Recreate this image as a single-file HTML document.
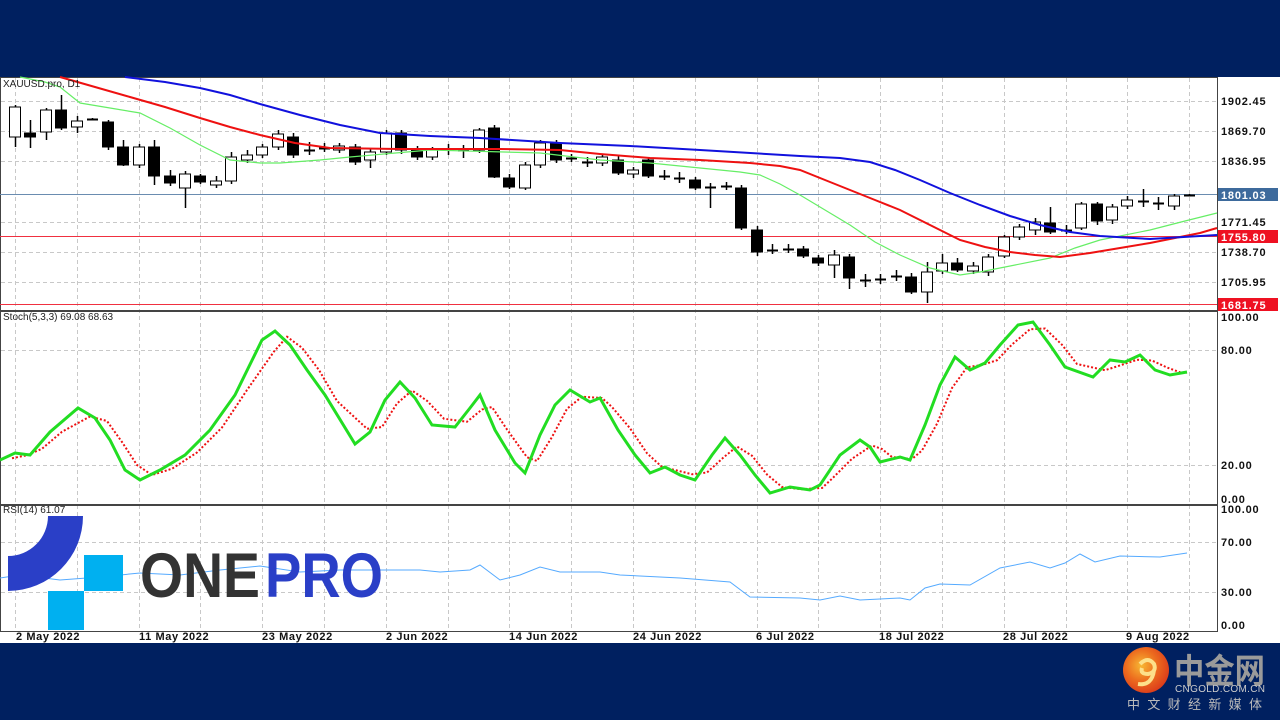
<!DOCTYPE html>
<html><head><meta charset="utf-8"><style>
body{margin:0;width:1280px;height:720px;background:#002060;overflow:hidden;position:relative;font-family:"Liberation Sans",sans-serif}
svg{position:absolute;left:0;top:0}
</style></head><body>
<svg id="s" width="1280" height="720" xmlns="http://www.w3.org/2000/svg">
<rect x="0" y="77" width="1280" height="566" fill="#fff"/>
<g id="grid" stroke="#c8c8c8" stroke-dasharray="4,3" stroke-width="1"></g>
<g fill="none" stroke-width="1" stroke="#444">
<rect x="0.5" y="77.5" width="1217" height="233"/>
<rect x="0.5" y="311.5" width="1217" height="193"/>
<rect x="0.5" y="505.5" width="1217" height="126"/>
</g>
<line x1="0" y1="194.5" x2="1217" y2="194.5" stroke="#6a8cb0"/>
<line x1="0" y1="236.5" x2="1217" y2="236.5" stroke="#f03040"/>
<line x1="0" y1="304.5" x2="1217" y2="304.5" stroke="#f03040"/>
<g id="candles"></g>
<polyline fill="none" stroke="#66ee66" stroke-width="1.2" points="20,77 45,82 60,87 80,103 110,108 140,113 170,128 200,145 230,160 260,163 280,163 320,160 350,157 430,150 540,153 600,160 650,163 700,168 740,172 760,175 780,184 800,195 825,210 850,225 875,242 900,255 930,268 960,275 980,272 1000,268 1050,258 1075,248 1100,240 1150,230 1185,221 1217,213"/>
<polyline fill="none" stroke="#ee1111" stroke-width="2" points="60,77 95,87 130,97 165,107 200,118 230,127 260,135 295,143 330,148 400,149 500,149 560,150 600,154 650,158 700,160 750,163 780,166 800,170 825,180 850,190 875,200 900,210 930,225 960,240 985,247 1010,252 1035,255 1060,257 1090,253 1120,248 1150,243 1180,237 1200,233 1217,228"/>
<polyline fill="none" stroke="#1111dd" stroke-width="2" points="125,77 165,82 200,88 230,95 260,104 300,115 340,125 380,133 430,136 480,138 560,143 630,146 700,150 800,156 840,158 870,162 895,170 920,180 950,193 980,205 1010,216 1040,225 1070,232 1100,236 1150,239 1217,235"/>
<polyline id="sig" fill="none" stroke="#ee1111" stroke-width="2" stroke-dasharray="2,2"/>
<polyline id="stk" fill="none" stroke="#22dd22" stroke-width="3"/>
<polyline fill="none" stroke="#55aaff" stroke-width="1" points="0,578 20,575 60,580 100,577 140,573 180,575 220,570 260,566 300,572 340,570 380,570 420,570 440,572 470,570 480,565 500,580 520,575 540,567 560,572 600,572 620,575 680,578 730,582 750,597 800,598 820,600 840,596 860,600 900,598 910,600 925,588 940,584 970,585 1000,568 1030,562 1050,568 1065,563 1080,554 1095,562 1120,556 1160,557 1187,553"/>
<g font-family="Liberation Sans, sans-serif" font-size="11" font-weight="bold" fill="#111" letter-spacing="0.8">
<text x="1221" y="105">1902.45</text><text x="1221" y="135">1869.70</text><text x="1221" y="165">1836.95</text>
<text x="1221" y="226">1771.45</text><text x="1221" y="256">1738.70</text><text x="1221" y="286">1705.95</text>
<text x="1221" y="321">100.00</text><text x="1221" y="354">80.00</text><text x="1221" y="469">20.00</text><text x="1221" y="503">0.00</text>
<text x="1221" y="513">100.00</text><text x="1221" y="546">70.00</text><text x="1221" y="596">30.00</text><text x="1221" y="629">0.00</text>
</g>
<rect x="1218" y="188" width="60" height="13" fill="#3d6a9c"/><text x="1221" y="199" font-size="11" font-weight="bold" fill="#fff" letter-spacing="0.8">1801.03</text>
<rect x="1218" y="230" width="60" height="13" fill="#ee1122"/><text x="1221" y="241" font-size="11" font-weight="bold" fill="#fff" letter-spacing="0.8">1755.80</text>
<rect x="1218" y="298" width="60" height="13" fill="#ee1122"/><text x="1221" y="309" font-size="11" font-weight="bold" fill="#fff" letter-spacing="0.8">1681.75</text>
<g font-size="10" fill="#222"><text x="3" y="87">XAUUSD.pro, D1</text><text x="3" y="320">Stoch(5,3,3) 69.08 68.63</text><text x="3" y="513">RSI(14) 61.07</text></g>
<g font-size="11" font-weight="bold" fill="#111" letter-spacing="0.6">
<text x="16" y="640">2 May 2022</text><text x="139" y="640">11 May 2022</text><text x="262" y="640">23 May 2022</text><text x="386" y="640">2 Jun 2022</text><text x="509" y="640">14 Jun 2022</text><text x="633" y="640">24 Jun 2022</text><text x="756" y="640">6 Jul 2022</text><text x="879" y="640">18 Jul 2022</text><text x="1003" y="640">28 Jul 2022</text><text x="1126" y="640">9 Aug 2022</text>
</g>
<path d="M8,591 A75,75 0 0 0 83,516 L48,516 A40,40 0 0 1 8,556 Z" fill="#2a3fc7"/>
<rect x="84" y="555" width="39" height="36" fill="#00b0f0"/>
<rect x="48" y="591" width="36" height="39" fill="#00b0f0"/>
<text x="140" y="597" font-size="63" font-weight="bold" fill="#333" textLength="120" lengthAdjust="spacingAndGlyphs">ONE</text>
<text x="265" y="597" font-size="63" font-weight="bold" fill="#2a3fc7" textLength="118" lengthAdjust="spacingAndGlyphs">PRO</text>
<defs><radialGradient id="gg" cx="0.4" cy="0.4" r="0.7"><stop offset="0" stop-color="#f7b733"/><stop offset="0.5" stop-color="#ec6a1e"/><stop offset="1" stop-color="#d8321a"/></radialGradient></defs>
<circle cx="1146" cy="670" r="23" fill="url(#gg)"/>
<path d="M1140,664 q8,-8 14,0 q3,8 -6,10 q-8,0 -6,-6 M1138,684 q14,2 16,-14" stroke="#fde08a" stroke-width="4" fill="none"/>
<text x="1174" y="683" font-family="Noto Sans CJK SC, sans-serif" font-size="34" font-weight="bold" fill="#9a9a9a" textLength="91" lengthAdjust="spacingAndGlyphs">中金网</text>
<text x="1175" y="692" font-size="10" fill="#ccc" textLength="90">CNGOLD.COM.CN</text>
<text x="1127" y="709" font-family="Noto Sans CJK SC, sans-serif" font-size="13" fill="#bbb" textLength="135">中文财经新媒体</text>
</svg>
<script>
var NS="http://www.w3.org/2000/svg",g=document.getElementById('grid'),c=document.getElementById('candles');
function L(p,a){var e=document.createElementNS(NS,'line');for(var k in a)e.setAttribute(k,a[k]);p.appendChild(e);return e}
for(var i=0;i<20;i++){var x=Math.round(15+61.8*i)+.5;L(g,{x1:x,y1:78,x2:x,y2:631});}
[101,131,161,222,252,282,350,465,542,592].forEach(function(y){L(g,{x1:1,y1:y+.5,x2:1217,y2:y+.5});});
var d=[[137,107,105,147],[133,137,120,148],[132,110,108,140],[110,128,95,130],[127,121,116,133],[119,119,118,120],[122,147,120,150],[147,165,140,166],[165,147,144,168],[147,176,140,185],[176,183,170,186],[188,174,171,208],[176,182,174,184],[185,181,176,188],[181,157,152,184],[160,155,150,163],[155,147,144,158],[147,134,130,150],[137,155,133,158],[150,150,142,155],[148,148,143,152],[150,146,143,153],[147,162,144,165],[160,152,148,168],[152,133,130,155],[133,150,130,154],[150,157,146,160],[157,150,147,160],[149,149,144,155],[150,150,145,158],[150,130,128,153],[128,177,125,178],[178,187,174,189],[188,165,162,190],[165,143,140,168],[143,160,140,163],[158,158,154,162],[162,162,157,167],[163,157,154,166],[160,173,156,175],[174,170,167,178],[160,176,157,178],[176,176,170,180],[178,178,172,183],[180,188,177,190],[187,187,183,208],[186,186,182,190],[188,228,185,230],[230,252,226,256],[250,250,244,254],[249,249,244,253],[249,256,246,258],[258,263,255,266],[265,255,250,278],[257,278,254,289],[280,280,274,287],[279,279,274,284],[276,276,270,281],[277,292,273,294],[292,272,262,303],[271,263,254,274],[263,270,258,272],[271,266,262,274],[272,257,254,276],[256,237,235,258],[237,227,224,240],[230,222,218,235],[223,232,207,234],[230,230,225,234],[228,204,202,230],[204,221,202,225],[220,207,204,224],[206,200,196,209],[201,201,189,207],[203,203,197,210],[206,196,194,210],[195,195,194,196]];
d.forEach(function(b,i){var x=Math.round(15+15.45*i),o=b[0],cl=b[1];L(c,{x1:x+.5,y1:b[2],x2:x+.5,y2:b[3],stroke:'#000','stroke-width':1.5});
var t=Math.min(o,cl),h=Math.abs(o-cl);if(h<2){L(c,{x1:x-5,y1:t+.5,x2:x+6,y2:t+.5,stroke:'#000','stroke-width':2});}else{var r=document.createElementNS(NS,'rect');r.setAttribute('x',x-5.5);r.setAttribute('y',t);r.setAttribute('width',11);r.setAttribute('height',h);r.setAttribute('fill',cl<o?'#fff':'#000');r.setAttribute('stroke','#000');c.appendChild(r);}});
var s=[[0,460],[15,453],[30,455],[50,432],[78,408],[95,418],[110,440],[125,470],[140,480],[160,470],[185,455],[210,430],[235,395],[262,340],[275,331],[290,345],[307,370],[325,395],[355,444],[370,432],[385,400],[400,382],[415,398],[432,425],[455,427],[470,408],[480,395],[495,430],[515,463],[525,473],[540,435],[555,405],[570,390],[590,402],[600,398],[618,430],[635,455],[650,473],[665,467],[680,475],[695,480],[712,455],[725,438],[740,455],[755,475],[770,493],[790,487],[810,490],[820,485],[840,455],[860,440],[870,447],[880,462],[900,457],[910,460],[925,425],[940,385],[955,357],[970,370],[985,363],[1000,345],[1018,325],[1033,322],[1050,345],[1065,367],[1093,377],[1110,360],[1125,362],[1140,355],[1155,370],[1170,375],[1187,372]];
document.getElementById('stk').setAttribute('points',s.map(function(p){return p.join(',')}).join(' '));
var q=[];for(var i=0;i<s.length;i++){var a=s[Math.max(0,i-1)],b=s[i],n=s[Math.min(s.length-1,i+1)];var x=Math.min(1187,b[0]+12);q.push(x+','+((a[1]+2*b[1]+n[1])/4));}
document.getElementById('sig').setAttribute('points',q.join(' '));
</script>
</body></html>
